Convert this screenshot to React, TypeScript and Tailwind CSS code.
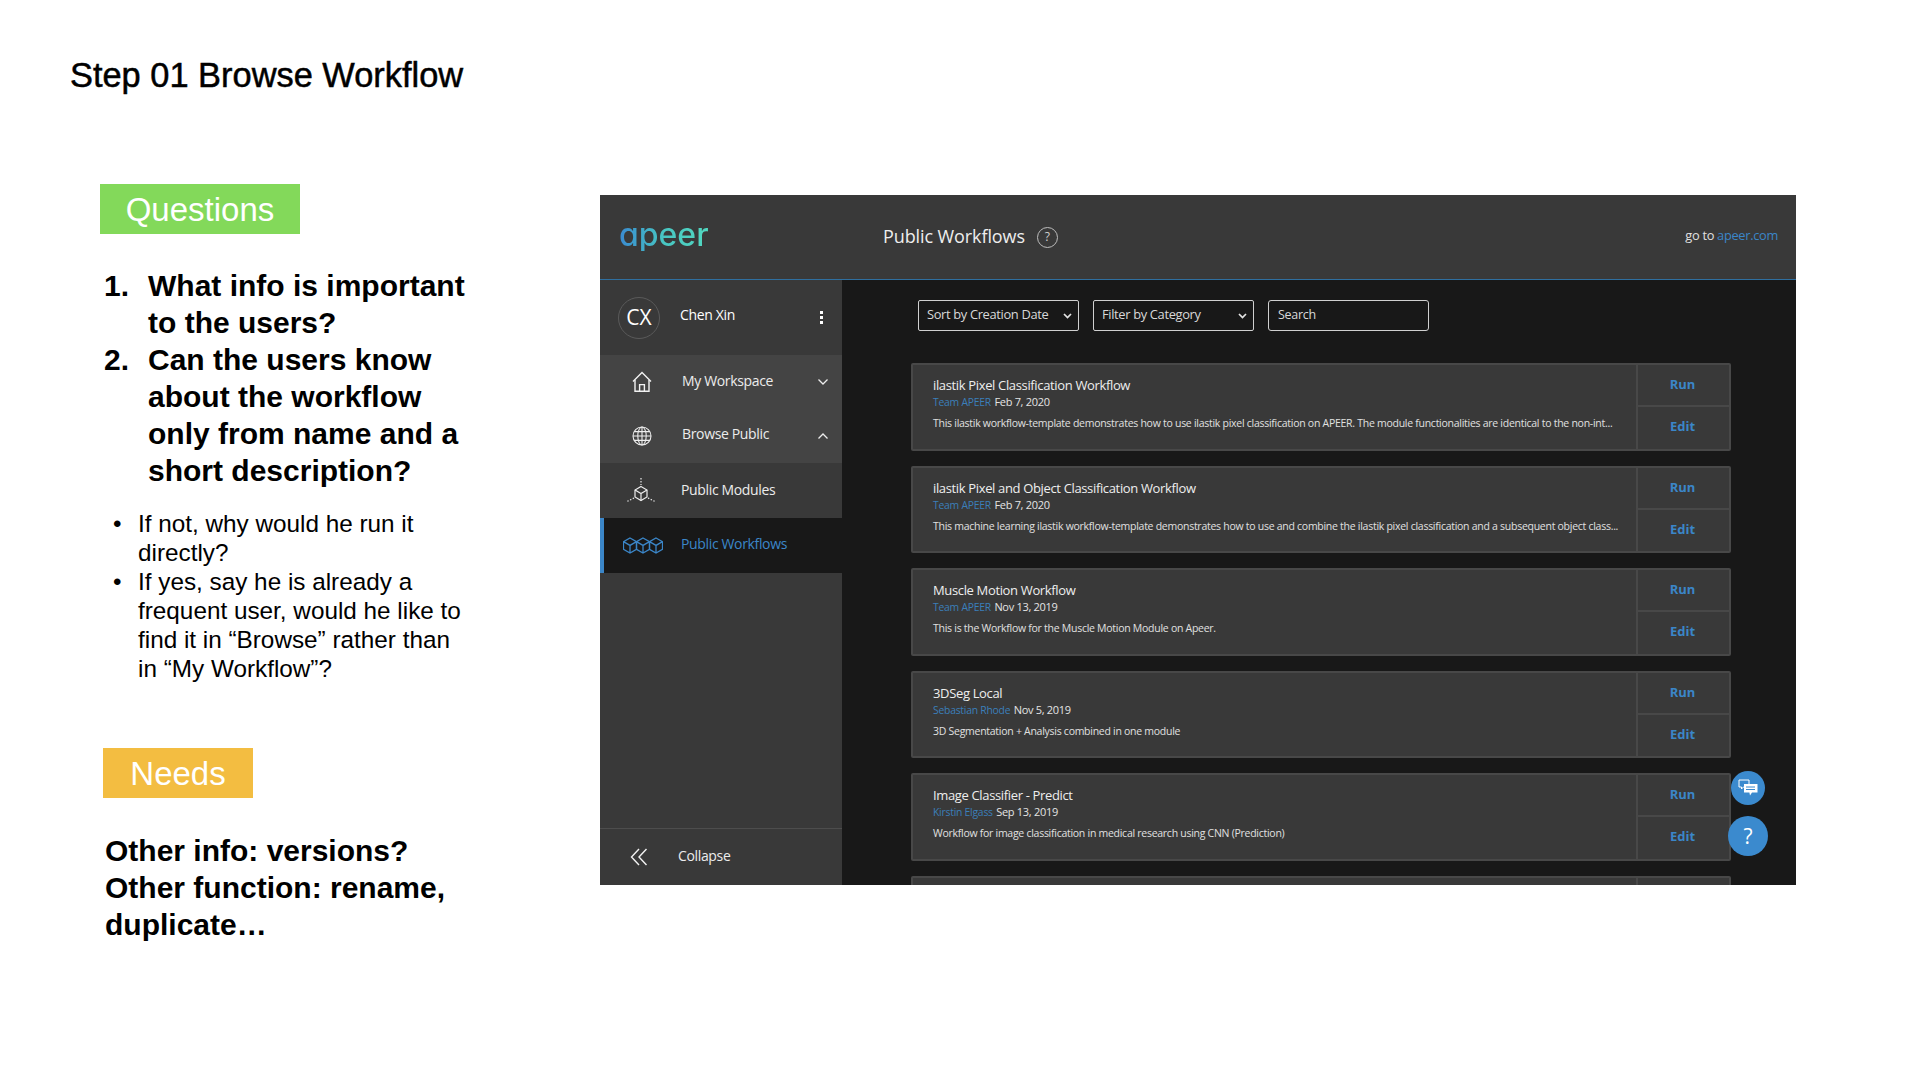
import React from 'react';

const workflows = [
  {
    title: 'ilastik Pixel Classification Workflow',
    author: 'Team APEER',
    date: 'Feb 7, 2020',
    desc: 'This ilastik workflow-template demonstrates how to use ilastik pixel classification on APEER. The module functionalities are identical to the non-int...',
  },
  {
    title: 'ilastik Pixel and Object Classification Workflow',
    author: 'Team APEER',
    date: 'Feb 7, 2020',
    desc: 'This machine learning ilastik workflow-template demonstrates how to use and combine the ilastik pixel classification and a subsequent object class...',
  },
  {
    title: 'Muscle Motion Workflow',
    author: 'Team APEER',
    date: 'Nov 13, 2019',
    desc: 'This is the Workflow for the Muscle Motion Module on Apeer.',
  },
  {
    title: '3DSeg Local',
    author: 'Sebastian Rhode',
    date: 'Nov 5, 2019',
    desc: '3D Segmentation + Analysis combined in one module',
  },
  {
    title: 'Image Classifier - Predict',
    author: 'Kirstin Elgass',
    date: 'Sep 13, 2019',
    desc: 'Workflow for image classification in medical research using CNN (Prediction)',
  },
  { title: '', author: '', date: '', desc: '' },
];

const Chevron: React.FC<{ up?: boolean; className?: string }> = ({ up, className }) => (
  <svg width="12" height="8" viewBox="0 0 12 8" fill="none" stroke="currentColor" strokeWidth="1.3" className={className}>
    <path d={up ? 'M1.5 6.5 6 2l4.5 4.5' : 'M1.5 1.5 6 6l4.5-4.5'} />
  </svg>
);

const HomeIcon = () => (
  <svg width="20" height="22" viewBox="0 0 20 22" fill="none" stroke="#f2f2f2" strokeWidth="1.4">
    <path d="M1 10.5 10 1.5l9 9" />
    <path d="M3 9v11.2h14V9" />
    <path d="M7.6 20v-6.4h4.8V20" />
  </svg>
);

const GlobeIcon = () => (
  <svg width="20" height="20" viewBox="0 0 20 20" fill="none" stroke="#ededed" strokeWidth="1.1">
    <circle cx="10" cy="10" r="9" />
    <ellipse cx="10" cy="10" rx="4.2" ry="9" />
    <path d="M10 1v18M1 10h18M2.2 5.6h15.6M2.2 14.4h15.6" />
  </svg>
);

const CubeIcon = () => (
  <svg width="32" height="28" viewBox="0 0 32 28" fill="none" stroke="#ededed" strokeWidth="1.2">
    <path d="M16 9.5 22 13v7l-6 3.5L10 20v-7z" />
    <path d="M10 13l6 3.5 6-3.5M16 16.5v7" />
    <path d="M16 1v7M9 21l-7 3.5M23 21l7 3.5" strokeDasharray="1.4 1.6" />
  </svg>
);

const hexCube = (x: number) => `M${x + 7} 1l6.5 3.6v7.8L${x + 7} 16l-6.5-3.6V4.6zM${x + 0.5} 4.6 ${x + 7} 8.4l6.5-3.8M${x + 7} 8.4V16`;

const WorkflowsIcon = () => (
  <svg width="40" height="17" viewBox="0 0 40 17" fill="none" stroke="#3b86c8" strokeWidth="1.3">
    <path d={hexCube(0)} />
    <path d={hexCube(13)} />
    <path d={hexCube(26)} />
  </svg>
);

const ChatIcon = () => (
  <svg width="20" height="18" viewBox="0 0 20 18" fill="none">
    <path d="M1 1h10v7H5.5L3.5 10V8H1z" stroke="#fff" strokeWidth="1" />
    <path d="M6 5h13.5v8.5H14L12 16.5l-.6-3H6z" fill="#fff" />
    <path d="M8 8h9M8 10.5h9" stroke="#3b8ace" strokeWidth="1" />
  </svg>
);

const Sidebar: React.FC = () => (
  <div className="w-[242px] shrink-0 flex flex-col bg-[#393939] text-[#ececec] text-[14px] tracking-[-0.35px]">
    <div className="h-[75px] flex items-center pl-[18px]">
      <div className="w-[42px] h-[42px] rounded-full border border-[#5a5a5a] flex items-center justify-center text-[21px] text-white tracking-normal">
        CX
      </div>
      <span className="ml-[20px] pb-[6px] text-white">Chen Xin</span>
      <div className="ml-auto mr-[19px] flex flex-col gap-[2px]">
        <div className="w-[3px] h-[3px] bg-white" />
        <div className="w-[3px] h-[3px] bg-white" />
        <div className="w-[3px] h-[3px] bg-white" />
      </div>
    </div>
    <div className="bg-[#444444]">
      <div className="h-[54px] flex items-center">
        <div className="w-[84px] flex justify-center">
          <HomeIcon />
        </div>
        <span className="-ml-[2px] pb-[4px]">My Workspace</span>
        <Chevron className="ml-auto mr-[13px]" />
      </div>
      <div className="h-[54px] flex items-center">
        <div className="w-[84px] flex justify-center">
          <GlobeIcon />
        </div>
        <span className="-ml-[2px] pb-[6px]">Browse Public</span>
        <Chevron up className="ml-auto mr-[13px]" />
      </div>
    </div>
    <div className="h-[55px] flex items-center">
      <div className="w-[81px] flex justify-center">
        <CubeIcon />
      </div>
      <span className="pb-[2px]">Public Modules</span>
    </div>
    <div className="h-[55px] flex items-center bg-[#181818] border-l-[4px] border-[#3b86c8] text-[#3b86c8]">
      <div className="w-[77px] flex justify-center">
        <WorkflowsIcon />
      </div>
      <span className="pb-[4px]">Public Workflows</span>
    </div>
    <div className="mt-auto h-[57px] border-t border-[#4d4d4d] flex items-center">
      <svg width="18" height="18" viewBox="0 0 18 18" fill="none" stroke="#f2f2f2" strokeWidth="1.4" className="ml-[30px]">
        <path d="M9 1 1.5 9 9 17M16.5 1 9 9l7.5 8" />
      </svg>
      <span className="ml-[30px] pb-[4px]">Collapse</span>
    </div>
  </div>
);

const Dropdown: React.FC<{ label: string }> = ({ label }) => (
  <div className="w-[161px] h-[31px] border border-[#d0d0d0] rounded-[2px] flex items-center justify-between pl-[8px] pr-[6px] bg-[#181818] text-[12.9px] text-[#d8d8d8] tracking-[-0.35px]">
    <span className="pb-[1px]">{label}</span>
    <svg width="9" height="6" viewBox="0 0 9 6" fill="none" stroke="#e4e4e4" strokeWidth="1.7">
      <path d="M1 1l3.5 3.5L8 1" />
    </svg>
  </div>
);

const WorkflowCard: React.FC<(typeof workflows)[number]> = ({ title, author, date, desc }) => (
  <div className="h-[87.5px] shrink-0 flex bg-[#393939] border-2 border-[#484848] rounded-[2px]">
    <div className="flex-1 min-w-0 pl-[20px] pt-[10px]">
      <div className="h-[19px] text-[13px] leading-[20px] text-[#eeeeee] tracking-[-0.35px]">{title}</div>
      <div className="text-[10.4px] leading-[15px] tracking-[-0.25px]">
        <span className="text-[#3b7fba]">{author}</span>{' '}
        <span className="ml-[1px] text-[11px] tracking-[-0.3px] text-[#e4e4e4]">{date}</span>
      </div>
      <div className="mt-[5px] text-[10.5px] leading-[16px] text-[#e0e0e0] tracking-[-0.27px] whitespace-nowrap">{desc}</div>
    </div>
    <div className="w-[93px] shrink-0 flex flex-col border-l-2 border-[#484848] text-[13px] font-bold text-[#3b86c8]">
      <div className="h-[42px] pr-[2px] flex items-center justify-center border-b-2 border-[#484848]">{title && 'Run'}</div>
      <div className="flex-1 pr-[2px] pb-[2px] flex items-center justify-center">{title && 'Edit'}</div>
    </div>
  </div>
);

const ApeerPanel: React.FC = () => (
  <div className="relative w-[1196px] h-[690px] flex flex-col overflow-hidden bg-[#181818]" style={{ fontFamily: '"Open Sans", "Noto Sans", sans-serif' }}>
    <div className="h-[85px] shrink-0 flex items-center bg-[#393939] border-b border-[#2f6f9f]">
      <div className="w-[283px] pl-[19px] pb-[4px]">
        <span className="inline-block font-[Inter] [font-feature-settings:'cv11'] text-[32px] leading-none font-medium text-transparent bg-clip-text bg-gradient-to-r from-[#3b8ad0] via-[#48c6c2] to-[#52d8c0]">
          apeer
        </span>
      </div>
      <span className="pb-[2px] text-[18px] text-[#eeeeee] tracking-[-0.1px]">Public Workflows</span>
      <div className="ml-[12px] w-[21px] h-[21px] rounded-full border border-[#bdbdbd] flex items-center justify-center text-[12px] text-[#d0d0d0]">?</div>
      <div className="ml-auto mr-[18px] pb-[2px] text-[12.8px] tracking-[-0.3px] text-[#e0e0e0]">
        go to <span className="text-[#3b86c8]">apeer.com</span>
      </div>
    </div>
    <div className="flex-1 min-h-0 flex">
      <Sidebar />
      <div className="flex-1 min-w-0 pt-[20px] pl-[69px] pr-[65px]">
        <div className="flex gap-[14px] pl-[7px]">
          <Dropdown label="Sort by Creation Date" />
          <Dropdown label="Filter by Category" />
          <div className="w-[161px] h-[31px] border border-[#d0d0d0] rounded-[3px] flex items-center pl-[9px] text-[12.5px] text-[#d8d8d8] tracking-[-0.3px]">
            <span className="pb-[1px]">Search</span>
          </div>
        </div>
        <div className="mt-[32px] flex flex-col gap-[15px]">
          {workflows.map((w, i) => (
            <WorkflowCard key={i} {...w} />
          ))}
        </div>
      </div>
    </div>
    {/* floating buttons */}
    <div className="absolute left-[1131px] top-[576px] w-[34px] h-[34px] rounded-full bg-[#3b8ace] flex items-center justify-center">
      <ChatIcon />
    </div>
    <div className="absolute left-[1128px] top-[621px] w-[40px] h-[40px] rounded-full bg-[#3b8ace] flex items-center justify-center text-[21px] text-white">
      <span className="pt-[1px]">?</span>
    </div>
  </div>
);

export default function App() {
  return (
    <div className="w-[1920px] h-[1080px] flex bg-white text-black overflow-hidden" style={{ fontFamily: '"Liberation Sans", Arial, sans-serif' }}>
      <div className="w-[600px] shrink-0 pt-[55px] flex flex-col items-start">
        <h1 className="ml-[70px] text-[34.4px] leading-[40px] whitespace-nowrap [-webkit-text-stroke:0.5px_black]">Step 01 Browse Workflow</h1>

        <div className="ml-[100px] mt-[89px] w-[200px] h-[50px] pt-[2px] bg-[#83d95a] flex items-center justify-center text-[33px] text-white">
          Questions
        </div>

        <ol className="ml-[104px] mt-[33px] w-[379px] text-[30px] leading-[37px] font-bold">
          <li className="flex">
            <span className="w-[44px] shrink-0">1.</span>
            <span>What info is important to the users?</span>
          </li>
          <li className="flex">
            <span className="w-[44px] shrink-0">2.</span>
            <span>Can the users know about the workflow only from name and a short description?</span>
          </li>
        </ol>

        <ul className="ml-[113px] mt-[20px] w-[355px] text-[24.3px] leading-[29px]">
          <li className="flex">
            <span className="w-[25px] shrink-0">•</span>
            <span>If not, why would he run it directly?</span>
          </li>
          <li className="flex">
            <span className="w-[25px] shrink-0">•</span>
            <span>If yes, say he is already a frequent user, would he like to find it in “Browse” rather than in “My Workflow”?</span>
          </li>
        </ul>

        <div className="ml-[103px] mt-[65px] w-[150px] h-[50px] pt-[2px] bg-[#f3bd41] flex items-center justify-center text-[33px] text-white">
          Needs
        </div>

        <div className="ml-[105px] mt-[34px] w-[370px] text-[30px] leading-[37px] font-bold">
          Other info: versions?
          <br />
          Other function: rename, duplicate…
        </div>
      </div>

      <div className="pt-[195px]">
        <ApeerPanel />
      </div>
    </div>
  );
}
